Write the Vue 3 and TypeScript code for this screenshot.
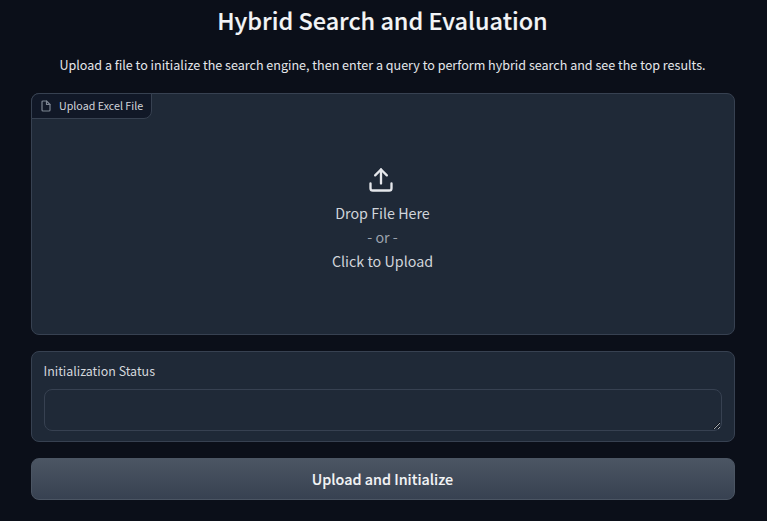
<script setup lang="ts">
const title = 'Hybrid Search and Evaluation'
</script>

<template>
  <main class="page">
    <h1 class="title">{{ title }}</h1>
    <p class="desc">Upload a file to initialize the search engine, then enter a query to perform hybrid search and see the top results.</p>
    <section class="upload">
      <div class="tag">
        <svg class="file" width="12" height="12" viewBox="0 0 24 24" fill="none" stroke="currentColor" stroke-width="2.4" stroke-linecap="round" stroke-linejoin="round">
          <path d="M13 2H6a2 2 0 0 0-2 2v16a2 2 0 0 0 2 2h12a2 2 0 0 0 2-2V9z" />
          <path d="M13 2v7h7" />
        </svg>
        <span>Upload Excel File</span>
      </div>
      <div class="drop">
        <svg class="up" width="28" height="28" viewBox="0 0 24 24" fill="none" stroke="currentColor" stroke-width="2" stroke-linecap="round" stroke-linejoin="round">
          <path d="M21 15v4a2 2 0 0 1-2 2H5a2 2 0 0 1-2-2v-4" />
          <path d="M17 8l-5-5-5 5" />
          <path d="M12 3v12" />
        </svg>
        <div class="line">Drop File Here</div>
        <div class="line or">- or -</div>
        <div class="line">Click to Upload</div>
      </div>
    </section>
    <section class="status">
      <label class="label" for="status">Initialization Status</label>
      <textarea id="status" class="box"></textarea>
    </section>
    <button class="btn" type="button">Upload and Initialize</button>
  </main>
</template>

<style>
html, body { background: #0b0f19; }
</style>

<style scoped>
.page {
  box-sizing: border-box;
  width: 767px;
  height: 521px;
  overflow: hidden;
  padding: 0 32px 0 31px;
  display: flex;
  flex-direction: column;
  background: #0b0f19;
  color: #f3f4f6;
  font-family: "Noto Sans CJK SC", "Noto Sans", sans-serif;
}
.title {
  margin: 5px 1px 0 0;
  font-size: 23.45px;
  line-height: 30px;
  font-weight: 500;
  -webkit-text-stroke: 0.15px currentColor;
  text-align: center;
  color: #f3f4f6;
}
.desc {
  margin: 21px 1px 0 0;
  font-size: 12.55px;
  line-height: 18px;
  text-align: center;
  color: #e5e7eb;
}
.upload {
  position: relative;
  box-sizing: border-box;
  height: 242px;
  margin-top: 19px;
  background: #1f2937;
  border: 1px solid #374151;
  border-radius: 8px;
}
.tag {
  position: absolute;
  top: -1px;
  left: -1px;
  box-sizing: border-box;
  height: 26px;
  display: flex;
  align-items: center;
  gap: 7px;
  padding: 0 8px 1px;
  background: #111827;
  border: 1px solid #374151;
  border-radius: 8px 0 8px 0;
  font-size: 10.7px;
  color: #d1d5db;
}
.file { color: #7d8592; flex: none; }
.drop {
  height: 100%;
  display: flex;
  flex-direction: column;
  align-items: center;
  padding-top: 72px;
  padding-right: 1px;
  box-sizing: border-box;
  color: #d1d5db;
  font-size: 14.3px;
}
.up { color: #e5e7eb; margin-bottom: 7px; margin-right: 4px; }
.line { line-height: 24px; }
.or { color: #9ca3af; }
.status {
  box-sizing: border-box;
  height: 91px;
  margin-top: 16px;
  padding: 10px 12px 10px 11.5px;
  background: #1f2937;
  border: 1px solid #374151;
  border-radius: 8px;
  display: flex;
  flex-direction: column;
}
.label {
  font-size: 12.45px;
  line-height: 18px;
  color: #d4d7dc;
}
.box {
  display: block;
  box-sizing: border-box;
  width: 100%;
  height: 42px;
  margin-top: 9px;
  background: #1f2937;
  border: 1px solid #374151;
  border-radius: 8px;
  outline: none;
  padding: 8px 12px;
  color: #f3f4f6;
  font: inherit;
}
.btn {
  box-sizing: border-box;
  height: 42px;
  margin-top: 16px;
  padding: 0 7px 2px 6px;
  background: linear-gradient(to bottom, #4b5563, #374151);
  border: 1px solid #4b5563;
  border-radius: 8px;
  color: #f3f4f6;
  font-family: inherit;
  font-size: 14.35px;
  font-weight: 500;
  -webkit-text-stroke: 0.1px currentColor;
}
</style>
